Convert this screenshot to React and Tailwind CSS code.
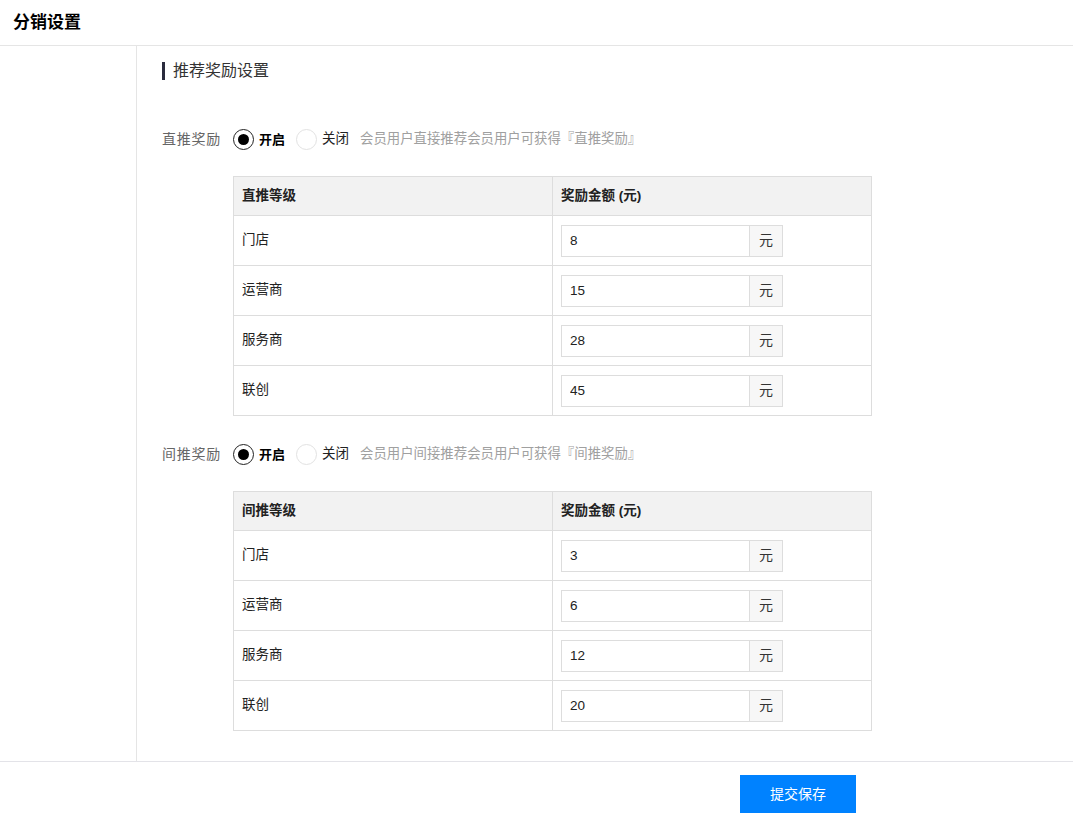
import React from 'react';

const FONT = { fontFamily: '"Liberation Sans", "Noto Sans CJK SC", sans-serif' };

const direct = [
  { name: '门店', value: '8' },
  { name: '运营商', value: '15' },
  { name: '服务商', value: '28' },
  { name: '联创', value: '45' },
];

const indirect = [
  { name: '门店', value: '3' },
  { name: '运营商', value: '6' },
  { name: '服务商', value: '12' },
  { name: '联创', value: '20' },
];

function Radio({ checked, label }) {
  return (
    <label className="flex items-center gap-[5px] cursor-pointer">
      {checked ? (
        <span className="w-[21px] h-[21px] rounded-full border-[1.5px] border-[#222] flex items-center justify-center">
          <span className="w-[11px] h-[11px] rounded-full bg-black" />
        </span>
      ) : (
        <span className="w-[21px] h-[21px] rounded-full border border-[#e2e2e2]" />
      )}
      <span className={checked ? 'text-[13px] font-bold text-black' : 'text-[13.5px] text-[#222]'}>{label}</span>
    </label>
  );
}

function SwitchRow({ label, hint }) {
  return (
    <div className="flex items-center h-[21px]">
      <span className="text-[14px] tracking-[0.75px] text-[#666] w-[71px]">{label}</span>
      <Radio checked label="开启" />
      <span className="w-[11px]" />
      <Radio label="关闭" />
      <span className="ml-[11px] text-[13.4px] text-[#a0a0a0]">{hint}</span>
    </div>
  );
}

function RewardTable({ title, rows }) {
  return (
    <table className="ml-[71px] w-[639px] border-collapse border border-[#dddddd] text-[13.5px] text-[#222]">
      <thead>
        <tr className="h-[39px] bg-[#f2f2f2]">
          <th className="w-1/2 border border-[#dddddd] pl-[8px] text-left font-bold text-[13.5px]">{title}</th>
          <th className="w-1/2 border border-[#dddddd] pl-[8px] text-left font-bold text-[13.5px]">奖励金额 (元)</th>
        </tr>
      </thead>
      <tbody>
        {rows.map((r) => (
          <tr key={r.name} className="h-[50px]">
            <td className="border border-[#dddddd] pl-[8px]">{r.name}</td>
            <td className="border border-[#dddddd] pl-[8px]">
              <div className="flex h-[32px] w-[222px]">
                <input
                  defaultValue={r.value}
                  className="w-[189px] h-full border border-[#dddddd] pl-[8px] text-[13.5px] text-[#222] outline-none"
                  style={FONT}
                />
                <span className="w-[33px] h-full border border-l-0 border-[#dddddd] bg-[#f7f7f7] flex items-center justify-center text-[14px] text-[#333]">元</span>
              </div>
            </td>
          </tr>
        ))}
      </tbody>
    </table>
  );
}

export default function App() {
  return (
    <div className="bg-white w-[1073px] min-h-[817px]" style={FONT}>
      <header className="h-[46px] border-b border-[#e5e5e5] flex items-center pl-[13px]">
        <h1 className="text-[17px] font-bold text-black">分销设置</h1>
      </header>

      <div className="flex border-b border-[#e3e3e8]">
        <aside className="w-[137px] shrink-0 border-r border-[#e5e5e5]" />
        <main className="flex-1 pl-[25px] pt-[16px] pb-[30px]">
          <div className="flex items-center h-[18px] gap-[8px]">
            <span className="w-[3px] h-[18px] bg-[#2a2b3d]" />
            <h2 className="text-[16px] text-[#333]">推荐奖励设置</h2>
          </div>

          <div className="mt-[49px]">
            <SwitchRow label="直推奖励" hint="会员用户直接推荐会员用户可获得『直推奖励』" />
          </div>
          <div className="mt-[26px]">
            <RewardTable title="直推等级" rows={direct} />
          </div>

          <div className="mt-[28px]">
            <SwitchRow label="间推奖励" hint="会员用户间接推荐会员用户可获得『间推奖励』" />
          </div>
          <div className="mt-[26px]">
            <RewardTable title="间推等级" rows={indirect} />
          </div>
        </main>
      </div>

      <footer className="pt-[13px] pl-[740px]">
        <button className="w-[116px] h-[38px] bg-[#0082ff] text-white text-[14px]">提交保存</button>
      </footer>
    </div>
  );
}
